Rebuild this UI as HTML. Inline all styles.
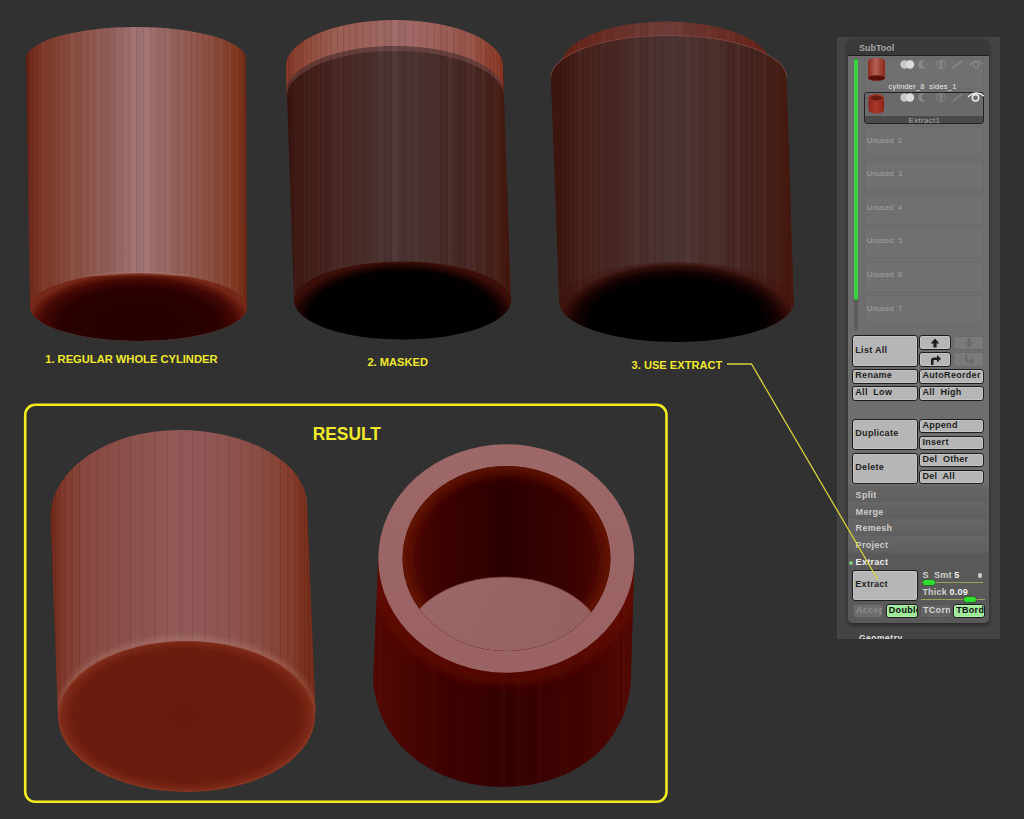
<!DOCTYPE html>
<html><head><meta charset="utf-8">
<style>
html,body{margin:0;padding:0;background:#313131;width:1024px;height:819px;overflow:hidden;}
svg{position:absolute;left:0;top:0;}
text{font-family:"Liberation Sans",sans-serif;}

#panel .strip{position:absolute;left:837px;top:36.7px;width:162.7px;height:602px;background:#444;}
#panel .inner{position:absolute;left:847.8px;top:39px;width:141.5px;height:584px;border-radius:5px;background:#5a5a5a;box-shadow:0 2px 4px rgba(0,0,0,0.45);overflow:hidden;}
#panel .hdr{position:absolute;left:0;top:0;width:100%;height:15.5px;background:#393939;border-bottom:1px solid #1f1f1f;}
#panel .list{position:absolute;left:0;top:16.5px;width:100%;height:430px;background:#6e6e6e;}
#panel .rows{position:absolute;left:0;top:446.2px;width:100%;height:67.5px;background:repeating-linear-gradient(#666 0px,#606060 15.5px,#555 16px,#6a6a6a 17px);}
#panel .sub{position:absolute;left:0;top:513.7px;width:100%;height:71px;background:#595959;}
.t{position:absolute;white-space:pre;font-family:"Liberation Sans",sans-serif;line-height:10px;}
.un{left:866.8px;font-size:7.6px;color:#a2a2a2;letter-spacing:0.1px;}
.mi{left:855.6px;font-size:9px;font-weight:bold;color:#cdcdcd;letter-spacing:0.3px;}
.srow{position:absolute;left:864.4px;width:119.4px;box-sizing:border-box;border:1px solid #6a6a6a;border-radius:2px;background:#707070;}
.srow.sel{border:1.5px solid #222;background:#6a6a6a;border-radius:3px;overflow:hidden;}
.srow .lbl{position:absolute;left:0;bottom:0;width:100%;height:7px;background:#4a4a4a;}
.b{position:absolute;box-sizing:border-box;border:1.2px solid #1c1c1c;border-radius:3px;background:#b6b6b6;box-shadow:inset 0 0 0 0.6px #cfcfcf;font-family:"Liberation Sans",sans-serif;font-weight:bold;font-size:9px;letter-spacing:0.3px;color:#1e1e1e;white-space:pre;padding-left:2.3px;line-height:10.8px;overflow:hidden;}
.b.dis{background:#7a7a7a;border-color:#6a6a6a;box-shadow:none;}
.b.dis2{background:#6c6c6c;border-color:#5e5e5e;box-shadow:none;color:#8c8c8c;}
.b.grn{background:#9ee89a;box-shadow:inset 0 0 0 0.6px #c4f8c0;color:#101010;}
.b.dk{background:#646464;border-color:#555;box-shadow:none;color:#d6d6d6;}
</style></head>
<body>
<svg width="1024" height="819" viewBox="0 0 1024 819">
<defs>
  <clipPath id="cap1top"><rect x="60" y="260" width="160" height="16"/></clipPath>
  <clipPath id="cp1"><path d="M26,59 A110,32 0 0 1 246,59 L247,307 A108.5,34 0 0 1 30,307 Z"/></clipPath>
  <clipPath id="cp2"><path d="M286,66 A108.5,46 0 0 1 503,66 L511,300 A108.5,39 0 0 1 294,300 Z"/></clipPath>
  <clipPath id="cp3t"><path d="M561.5,64.6 A104.5,43 0 0 1 770.5,64.6 L771,90 L561.5,90 Z"/></clipPath>
  <clipPath id="cp3"><path d="M550.7,77.5 A118,42 0 0 1 786.7,77.5 L794,302 A117.5,40 0 0 1 559,302 Z"/></clipPath>
  <clipPath id="cpr1"><path d="M50.5,517 A128.3,87 0 0 1 178.8,430 A128.3,75 0 0 1 307.1,505 L315,700 A128,75 0 0 1 58,716 Z"/></clipPath>
  <clipPath id="cpr2"><path d="M378.4,558 L373,680 C378,750 440,787 503,787 C566,787 626,752 631,680 L634.2,558 Z"/></clipPath>
  <clipPath id="holeclip"><ellipse cx="506.5" cy="558.5" rx="104" ry="92.5"/></clipPath>
  <linearGradient id="c1side" x1="26" y1="0" x2="247" y2="0" gradientUnits="userSpaceOnUse">
    <stop offset="0" stop-color="#6c2416"/>
    <stop offset="0.06" stop-color="#7e3828"/>
    <stop offset="0.25" stop-color="#8c5246"/>
    <stop offset="0.45" stop-color="#9a6a68"/>
    <stop offset="0.53" stop-color="#a27574"/>
    <stop offset="0.68" stop-color="#96625c"/>
    <stop offset="0.85" stop-color="#8c4c3e"/>
    <stop offset="0.96" stop-color="#80361e"/>
    <stop offset="1" stop-color="#702814"/>
  </linearGradient>
  <radialGradient id="c1cap" cx="138.5" cy="324" r="112" gradientUnits="userSpaceOnUse" gradientTransform="translate(0 324) scale(1 0.46) translate(0 -324)">
    <stop offset="0" stop-color="#240000"/>
    <stop offset="0.7" stop-color="#2a0100"/>
    <stop offset="0.86" stop-color="#440804"/>
    <stop offset="0.95" stop-color="#62180c"/>
    <stop offset="1" stop-color="#762818"/>
  </radialGradient>
  <linearGradient id="c2side" x1="286" y1="0" x2="511" y2="0" gradientUnits="userSpaceOnUse">
    <stop offset="0" stop-color="#3c1610"/>
    <stop offset="0.12" stop-color="#44201a"/>
    <stop offset="0.5" stop-color="#4c3535"/>
    <stop offset="0.88" stop-color="#46241e"/>
    <stop offset="1" stop-color="#48180e"/>
  </linearGradient>
  <linearGradient id="c2band" x1="286" y1="0" x2="503" y2="0" gradientUnits="userSpaceOnUse">
    <stop offset="0" stop-color="#8a3a28"/>
    <stop offset="0.2" stop-color="#985a4e"/>
    <stop offset="0.55" stop-color="#a06a68"/>
    <stop offset="0.85" stop-color="#985448"/>
    <stop offset="1" stop-color="#8a3520"/>
  </linearGradient>
  <radialGradient id="c2cap" cx="402.5" cy="318" r="112" gradientUnits="userSpaceOnUse" gradientTransform="translate(0 318) scale(1 0.5) translate(0 -318)">
    <stop offset="0" stop-color="#000"/>
    <stop offset="0.84" stop-color="#030000"/>
    <stop offset="0.94" stop-color="#240604"/>
    <stop offset="1" stop-color="#3c0e08"/>
  </radialGradient>
  <linearGradient id="c3side" x1="551" y1="0" x2="794" y2="0" gradientUnits="userSpaceOnUse">
    <stop offset="0" stop-color="#3e140e"/>
    <stop offset="0.15" stop-color="#46221c"/>
    <stop offset="0.5" stop-color="#4d3535"/>
    <stop offset="0.85" stop-color="#46241e"/>
    <stop offset="1" stop-color="#4a180e"/>
  </linearGradient>
  <linearGradient id="c3top" x1="561" y1="0" x2="771" y2="0" gradientUnits="userSpaceOnUse">
    <stop offset="0" stop-color="#662216"/>
    <stop offset="0.5" stop-color="#6e3c38"/>
    <stop offset="1" stop-color="#662216"/>
  </linearGradient>
  <radialGradient id="c3cap" cx="676.5" cy="324" r="120" gradientUnits="userSpaceOnUse" gradientTransform="translate(0 324) scale(1 0.52) translate(0 -324)">
    <stop offset="0" stop-color="#000"/>
    <stop offset="0.72" stop-color="#010000"/>
    <stop offset="0.84" stop-color="#140202"/>
    <stop offset="0.93" stop-color="#2e0a06" stop-opacity="0.9"/>
    <stop offset="1" stop-color="#401008" stop-opacity="0.3"/>
  </radialGradient>
  <linearGradient id="r1side" x1="50" y1="0" x2="315" y2="0" gradientUnits="userSpaceOnUse">
    <stop offset="0" stop-color="#742818"/>
    <stop offset="0.04" stop-color="#80382a"/>
    <stop offset="0.15" stop-color="#8a4a42"/>
    <stop offset="0.35" stop-color="#8e5450"/>
    <stop offset="0.55" stop-color="#935c5a"/>
    <stop offset="0.8" stop-color="#8a4c44"/>
    <stop offset="0.93" stop-color="#843a28"/>
    <stop offset="1" stop-color="#762a16"/>
  </linearGradient>
  <radialGradient id="r1cap" cx="186.5" cy="716" r="128" gradientUnits="userSpaceOnUse" gradientTransform="translate(0 716) scale(1 0.59) translate(0 -716)">
    <stop offset="0" stop-color="#6a1a0c"/>
    <stop offset="0.88" stop-color="#6c1c0e"/>
    <stop offset="0.97" stop-color="#7a2816"/>
    <stop offset="1" stop-color="#883420"/>
  </radialGradient>
  <linearGradient id="r1hl" x1="0" y1="630" x2="0" y2="650" gradientUnits="userSpaceOnUse">
    <stop offset="0" stop-color="#fff" stop-opacity="0"/>
    <stop offset="0.7" stop-color="#ffd8d0" stop-opacity="0.18"/>
    <stop offset="1" stop-color="#fff" stop-opacity="0"/>
  </linearGradient>
  <linearGradient id="r2body" x1="373" y1="0" x2="634" y2="0" gradientUnits="userSpaceOnUse">
    <stop offset="0" stop-color="#560a04"/>
    <stop offset="0.2" stop-color="#440402"/>
    <stop offset="0.5" stop-color="#330100"/>
    <stop offset="0.8" stop-color="#420402"/>
    <stop offset="1" stop-color="#560a04"/>
  </linearGradient>
  <linearGradient id="r2hole" x1="402" y1="0" x2="611" y2="0" gradientUnits="userSpaceOnUse">
    <stop offset="0" stop-color="#4e0a04"/>
    <stop offset="0.2" stop-color="#3a0201"/>
    <stop offset="0.5" stop-color="#2c0000"/>
    <stop offset="0.8" stop-color="#380201"/>
    <stop offset="1" stop-color="#4c0a04"/>
  </linearGradient>
  <linearGradient id="r2rim" x1="0" y1="444" x2="0" y2="673" gradientUnits="userSpaceOnUse">
    <stop offset="0" stop-color="#9e6868"/>
    <stop offset="1" stop-color="#9a6262"/>
  </linearGradient>
  <linearGradient id="r2disk" x1="420" y1="577" x2="590" y2="650" gradientUnits="userSpaceOnUse">
    <stop offset="0" stop-color="#9a6666"/>
    <stop offset="1" stop-color="#946060"/>
  </linearGradient>
</defs>

<!-- ============ Cylinder 1 ============ -->
<path d="M26,59 A110,32 0 0 1 246,59 L247,307 A108.5,34 0 0 1 30,307 Z" fill="url(#c1side)"/>
<g clip-path="url(#cp1)"><rect x="26.5" y="20" width="0.2" height="300" fill="#fff" opacity="0.019"/><rect x="26.7" y="20" width="0.7" height="300" fill="#000" opacity="0.021"/><rect x="27.4" y="20" width="1.2" height="300" fill="#000" opacity="0.002"/><rect x="28.6" y="20" width="1.6" height="300" fill="#fff" opacity="0.029"/><rect x="30.2" y="20" width="2.1" height="300" fill="#fff" opacity="0.008"/><rect x="34.9" y="20" width="3.0" height="300" fill="#000" opacity="0.029"/><rect x="37.8" y="20" width="3.4" height="300" fill="#000" opacity="0.022"/><rect x="41.2" y="20" width="3.8" height="300" fill="#fff" opacity="0.022"/><rect x="49.2" y="20" width="4.6" height="300" fill="#000" opacity="0.026"/><rect x="53.8" y="20" width="4.9" height="300" fill="#000" opacity="0.002"/><rect x="64.0" y="20" width="5.6" height="300" fill="#000" opacity="0.011"/><rect x="69.5" y="20" width="5.9" height="300" fill="#fff" opacity="0.030"/><rect x="75.4" y="20" width="6.1" height="300" fill="#000" opacity="0.025"/><rect x="101.1" y="20" width="6.9" height="300" fill="#000" opacity="0.028"/><rect x="108.0" y="20" width="7.0" height="300" fill="#000" opacity="0.033"/><rect x="122.1" y="20" width="7.2" height="300" fill="#fff" opacity="0.005"/><rect x="129.3" y="20" width="7.2" height="300" fill="#fff" opacity="0.034"/><rect x="136.5" y="20" width="7.2" height="300" fill="#000" opacity="0.022"/><rect x="143.7" y="20" width="7.2" height="300" fill="#fff" opacity="0.018"/><rect x="150.9" y="20" width="7.1" height="300" fill="#000" opacity="0.012"/><rect x="158.0" y="20" width="7.0" height="300" fill="#000" opacity="0.020"/><rect x="171.9" y="20" width="6.7" height="300" fill="#000" opacity="0.033"/><rect x="191.5" y="20" width="6.1" height="300" fill="#000" opacity="0.006"/><rect x="214.3" y="20" width="4.9" height="300" fill="#000" opacity="0.025"/><rect x="219.2" y="20" width="4.6" height="300" fill="#fff" opacity="0.029"/><rect x="223.8" y="20" width="4.2" height="300" fill="#000" opacity="0.010"/><rect x="228.0" y="20" width="3.8" height="300" fill="#fff" opacity="0.030"/><rect x="235.2" y="20" width="3.0" height="300" fill="#fff" opacity="0.028"/><rect x="238.1" y="20" width="2.5" height="300" fill="#000" opacity="0.005"/><rect x="240.7" y="20" width="2.1" height="300" fill="#fff" opacity="0.027"/><rect x="244.4" y="20" width="1.2" height="300" fill="#fff" opacity="0.022"/><rect x="245.6" y="20" width="0.7" height="300" fill="#fff" opacity="0.025"/><rect x="246.3" y="20" width="0.2" height="300" fill="#fff" opacity="0.031"/><path d="M26.5,20V320M26.7,20V320M27.4,20V320M28.6,20V320M30.2,20V320M32.3,20V320M34.9,20V320M37.8,20V320M41.2,20V320M45.0,20V320M49.2,20V320M53.8,20V320M58.7,20V320M64.0,20V320M69.5,20V320M75.4,20V320M81.5,20V320M87.8,20V320M94.4,20V320M101.1,20V320M108.0,20V320M115.0,20V320M122.1,20V320M129.3,20V320M136.5,20V320M143.7,20V320M150.9,20V320M158.0,20V320M165.0,20V320M171.9,20V320M178.6,20V320M185.2,20V320M191.5,20V320M197.6,20V320M203.5,20V320M209.0,20V320M214.3,20V320M219.2,20V320M223.8,20V320M228.0,20V320M231.8,20V320M235.2,20V320M238.1,20V320M240.7,20V320M242.8,20V320M244.4,20V320M245.6,20V320M246.3,20V320" stroke="#000" stroke-width="0.7" opacity="0.13"/></g>
<ellipse cx="138.5" cy="307" rx="108.5" ry="34" fill="url(#c1cap)"/>
<g clip-path="url(#cap1top)"><ellipse cx="138.5" cy="307" rx="107.5" ry="33.5" fill="none" stroke="#e0a898" stroke-width="1.4" opacity="0.45" filter="url(#blur1)"/></g>

<!-- ============ Cylinder 2 ============ -->
<path d="M286,66 A108.5,46 0 0 1 503,66 L511,300 A108.5,39 0 0 1 294,300 Z" fill="url(#c2side)"/>
<path d="M286,66 A108.5,46 0 0 1 503,66 L503.5,92 A108.5,46 0 0 0 286.5,92 Z" fill="url(#c2band)"/>
<path d="M286.5,92 A108.5,46 0 0 1 503.5,92 L504,97 A108.5,46 0 0 0 286.7,97 Z" fill="#8a5654" opacity="0.45"/>
<g clip-path="url(#cp2)"><rect x="288.5" y="15" width="0.2" height="305" fill="#000" opacity="0.022"/><rect x="294.3" y="15" width="2.5" height="305" fill="#fff" opacity="0.014"/><rect x="299.8" y="15" width="3.4" height="305" fill="#000" opacity="0.027"/><rect x="303.2" y="15" width="3.8" height="305" fill="#fff" opacity="0.014"/><rect x="307.0" y="15" width="4.2" height="305" fill="#fff" opacity="0.016"/><rect x="311.2" y="15" width="4.6" height="305" fill="#000" opacity="0.000"/><rect x="315.8" y="15" width="4.9" height="305" fill="#fff" opacity="0.008"/><rect x="331.5" y="15" width="5.9" height="305" fill="#fff" opacity="0.024"/><rect x="337.4" y="15" width="6.1" height="305" fill="#fff" opacity="0.019"/><rect x="343.5" y="15" width="6.3" height="305" fill="#fff" opacity="0.000"/><rect x="356.4" y="15" width="6.7" height="305" fill="#fff" opacity="0.006"/><rect x="377.0" y="15" width="7.1" height="305" fill="#fff" opacity="0.029"/><rect x="384.1" y="15" width="7.2" height="305" fill="#000" opacity="0.020"/><rect x="391.3" y="15" width="7.2" height="305" fill="#fff" opacity="0.028"/><rect x="398.5" y="15" width="7.2" height="305" fill="#000" opacity="0.029"/><rect x="412.9" y="15" width="7.1" height="305" fill="#fff" opacity="0.011"/><rect x="420.0" y="15" width="7.0" height="305" fill="#fff" opacity="0.004"/><rect x="427.0" y="15" width="6.9" height="305" fill="#fff" opacity="0.009"/><rect x="433.9" y="15" width="6.7" height="305" fill="#000" opacity="0.000"/><rect x="440.6" y="15" width="6.6" height="305" fill="#000" opacity="0.010"/><rect x="447.2" y="15" width="6.3" height="305" fill="#fff" opacity="0.025"/><rect x="453.5" y="15" width="6.1" height="305" fill="#000" opacity="0.009"/><rect x="459.6" y="15" width="5.9" height="305" fill="#000" opacity="0.021"/><rect x="465.5" y="15" width="5.6" height="305" fill="#fff" opacity="0.029"/><rect x="471.0" y="15" width="5.3" height="305" fill="#fff" opacity="0.022"/><rect x="481.2" y="15" width="4.6" height="305" fill="#fff" opacity="0.024"/><rect x="485.8" y="15" width="4.2" height="305" fill="#000" opacity="0.017"/><rect x="490.0" y="15" width="3.8" height="305" fill="#fff" opacity="0.001"/><rect x="493.8" y="15" width="3.4" height="305" fill="#fff" opacity="0.029"/><rect x="497.2" y="15" width="3.0" height="305" fill="#fff" opacity="0.023"/><rect x="504.8" y="15" width="1.6" height="305" fill="#fff" opacity="0.011"/><rect x="506.4" y="15" width="1.2" height="305" fill="#000" opacity="0.023"/><rect x="507.6" y="15" width="0.7" height="305" fill="#fff" opacity="0.022"/><path d="M288.5,15V320M288.7,15V320M289.4,15V320M290.6,15V320M292.2,15V320M294.3,15V320M296.9,15V320M299.8,15V320M303.2,15V320M307.0,15V320M311.2,15V320M315.8,15V320M320.7,15V320M326.0,15V320M331.5,15V320M337.4,15V320M343.5,15V320M349.8,15V320M356.4,15V320M363.1,15V320M370.0,15V320M377.0,15V320M384.1,15V320M391.3,15V320M398.5,15V320M405.7,15V320M412.9,15V320M420.0,15V320M427.0,15V320M433.9,15V320M440.6,15V320M447.2,15V320M453.5,15V320M459.6,15V320M465.5,15V320M471.0,15V320M476.3,15V320M481.2,15V320M485.8,15V320M490.0,15V320M493.8,15V320M497.2,15V320M500.1,15V320M502.7,15V320M504.8,15V320M506.4,15V320M507.6,15V320M508.3,15V320" stroke="#000" stroke-width="0.7" opacity="0.14"/></g>
<ellipse cx="402.5" cy="300.6" rx="108.5" ry="39" fill="url(#c2cap)"/>

<!-- ============ Cylinder 3 ============ -->
<path d="M561.5,64.6 A104.5,43 0 0 1 770.5,64.6 L771,90 L561.5,90 Z" fill="url(#c3top)"/>
<g clip-path="url(#cp3t)"><rect x="561.0" y="15" width="0.3" height="80" fill="#000" opacity="0.016"/><rect x="562.0" y="15" width="1.3" height="80" fill="#fff" opacity="0.015"/><rect x="565.1" y="15" width="2.3" height="80" fill="#000" opacity="0.002"/><rect x="567.3" y="15" width="2.7" height="80" fill="#fff" opacity="0.008"/><rect x="573.3" y="15" width="3.7" height="80" fill="#fff" opacity="0.010"/><rect x="577.0" y="15" width="4.1" height="80" fill="#fff" opacity="0.017"/><rect x="585.6" y="15" width="4.9" height="80" fill="#000" opacity="0.020"/><rect x="590.5" y="15" width="5.3" height="80" fill="#fff" opacity="0.016"/><rect x="601.4" y="15" width="5.9" height="80" fill="#fff" opacity="0.014"/><rect x="607.3" y="15" width="6.2" height="80" fill="#000" opacity="0.019"/><rect x="613.5" y="15" width="6.5" height="80" fill="#fff" opacity="0.011"/><rect x="626.7" y="15" width="6.9" height="80" fill="#000" opacity="0.006"/><rect x="633.6" y="15" width="7.0" height="80" fill="#fff" opacity="0.019"/><rect x="640.6" y="15" width="7.2" height="80" fill="#000" opacity="0.020"/><rect x="647.8" y="15" width="7.3" height="80" fill="#fff" opacity="0.016"/><rect x="669.7" y="15" width="7.3" height="80" fill="#fff" opacity="0.007"/><rect x="677.0" y="15" width="7.3" height="80" fill="#fff" opacity="0.015"/><rect x="684.2" y="15" width="7.2" height="80" fill="#000" opacity="0.019"/><rect x="691.4" y="15" width="7.0" height="80" fill="#000" opacity="0.015"/><rect x="705.3" y="15" width="6.7" height="80" fill="#fff" opacity="0.011"/><rect x="718.5" y="15" width="6.2" height="80" fill="#000" opacity="0.007"/><rect x="724.7" y="15" width="5.9" height="80" fill="#fff" opacity="0.016"/><rect x="730.6" y="15" width="5.6" height="80" fill="#fff" opacity="0.012"/><rect x="736.3" y="15" width="5.3" height="80" fill="#000" opacity="0.011"/><rect x="741.5" y="15" width="4.9" height="80" fill="#fff" opacity="0.013"/><rect x="750.9" y="15" width="4.1" height="80" fill="#fff" opacity="0.007"/><rect x="758.7" y="15" width="3.2" height="80" fill="#000" opacity="0.005"/><rect x="761.9" y="15" width="2.7" height="80" fill="#fff" opacity="0.015"/><rect x="764.7" y="15" width="2.3" height="80" fill="#fff" opacity="0.009"/><rect x="766.9" y="15" width="1.8" height="80" fill="#fff" opacity="0.013"/><rect x="770.0" y="15" width="0.8" height="80" fill="#fff" opacity="0.002"/><path d="M561.0,15V95M561.3,15V95M562.0,15V95M563.3,15V95M565.1,15V95M567.3,15V95M570.1,15V95M573.3,15V95M577.0,15V95M581.1,15V95M585.6,15V95M590.5,15V95M595.7,15V95M601.4,15V95M607.3,15V95M613.5,15V95M620.0,15V95M626.7,15V95M633.6,15V95M640.6,15V95M647.8,15V95M655.0,15V95M662.3,15V95M669.7,15V95M677.0,15V95M684.2,15V95M691.4,15V95M698.4,15V95M705.3,15V95M712.0,15V95M718.5,15V95M724.7,15V95M730.6,15V95M736.3,15V95M741.5,15V95M746.4,15V95M750.9,15V95M755.0,15V95M758.7,15V95M761.9,15V95M764.7,15V95M766.9,15V95M768.7,15V95M770.0,15V95M770.7,15V95" stroke="#000" stroke-width="0.7" opacity="0.09"/></g>
<g clip-path="url(#cp3)"><path d="M550.7,77.5 A118,42 0 0 1 786.7,77.5 L794,302 A117.5,40 0 0 1 559,302 Z" fill="url(#c3side)"/><rect x="550.0" y="30" width="0.2" height="290" fill="#fff" opacity="0.005"/><rect x="550.2" y="30" width="0.7" height="290" fill="#000" opacity="0.002"/><rect x="550.9" y="30" width="1.2" height="290" fill="#000" opacity="0.011"/><rect x="552.1" y="30" width="1.6" height="290" fill="#fff" opacity="0.015"/><rect x="553.8" y="30" width="2.1" height="290" fill="#fff" opacity="0.013"/><rect x="555.9" y="30" width="2.6" height="290" fill="#fff" opacity="0.003"/><rect x="558.4" y="30" width="3.0" height="290" fill="#000" opacity="0.025"/><rect x="561.4" y="30" width="3.4" height="290" fill="#fff" opacity="0.007"/><rect x="564.8" y="30" width="3.8" height="290" fill="#000" opacity="0.028"/><rect x="568.7" y="30" width="4.2" height="290" fill="#000" opacity="0.012"/><rect x="577.5" y="30" width="5.0" height="290" fill="#fff" opacity="0.026"/><rect x="582.5" y="30" width="5.3" height="290" fill="#fff" opacity="0.004"/><rect x="587.9" y="30" width="5.7" height="290" fill="#fff" opacity="0.009"/><rect x="599.5" y="30" width="6.2" height="290" fill="#fff" opacity="0.017"/><rect x="605.7" y="30" width="6.5" height="290" fill="#000" opacity="0.011"/><rect x="612.2" y="30" width="6.7" height="290" fill="#000" opacity="0.002"/><rect x="618.9" y="30" width="6.9" height="290" fill="#fff" opacity="0.006"/><rect x="625.8" y="30" width="7.1" height="290" fill="#000" opacity="0.013"/><rect x="632.9" y="30" width="7.2" height="290" fill="#fff" opacity="0.018"/><rect x="640.2" y="30" width="7.4" height="290" fill="#000" opacity="0.009"/><rect x="655.0" y="30" width="7.5" height="290" fill="#000" opacity="0.007"/><rect x="662.5" y="30" width="7.5" height="290" fill="#000" opacity="0.016"/><rect x="685.0" y="30" width="7.4" height="290" fill="#fff" opacity="0.029"/><rect x="692.5" y="30" width="7.4" height="290" fill="#fff" opacity="0.013"/><rect x="707.1" y="30" width="7.1" height="290" fill="#fff" opacity="0.015"/><rect x="714.2" y="30" width="6.9" height="290" fill="#fff" opacity="0.020"/><rect x="727.8" y="30" width="6.5" height="290" fill="#000" opacity="0.026"/><rect x="734.3" y="30" width="6.2" height="290" fill="#fff" opacity="0.021"/><rect x="740.5" y="30" width="6.0" height="290" fill="#000" opacity="0.017"/><rect x="746.5" y="30" width="5.7" height="290" fill="#000" opacity="0.025"/><rect x="757.5" y="30" width="5.0" height="290" fill="#000" opacity="0.020"/><rect x="762.5" y="30" width="4.6" height="290" fill="#fff" opacity="0.021"/><rect x="767.1" y="30" width="4.2" height="290" fill="#000" opacity="0.030"/><rect x="775.2" y="30" width="3.4" height="290" fill="#fff" opacity="0.012"/><rect x="778.6" y="30" width="3.0" height="290" fill="#000" opacity="0.001"/><rect x="781.6" y="30" width="2.6" height="290" fill="#000" opacity="0.005"/><rect x="784.1" y="30" width="2.1" height="290" fill="#fff" opacity="0.002"/><rect x="787.9" y="30" width="1.2" height="290" fill="#fff" opacity="0.007"/><rect x="789.1" y="30" width="0.7" height="290" fill="#000" opacity="0.026"/><rect x="789.8" y="30" width="0.2" height="290" fill="#fff" opacity="0.013"/><path d="M550.0,30V320M550.2,30V320M550.9,30V320M552.1,30V320M553.8,30V320M555.9,30V320M558.4,30V320M561.4,30V320M564.8,30V320M568.7,30V320M572.9,30V320M577.5,30V320M582.5,30V320M587.9,30V320M593.5,30V320M599.5,30V320M605.7,30V320M612.2,30V320M618.9,30V320M625.8,30V320M632.9,30V320M640.2,30V320M647.5,30V320M655.0,30V320M662.5,30V320M670.0,30V320M677.5,30V320M685.0,30V320M692.5,30V320M699.8,30V320M707.1,30V320M714.2,30V320M721.1,30V320M727.8,30V320M734.3,30V320M740.5,30V320M746.5,30V320M752.1,30V320M757.5,30V320M762.5,30V320M767.1,30V320M771.3,30V320M775.2,30V320M778.6,30V320M781.6,30V320M784.1,30V320M786.2,30V320M787.9,30V320M789.1,30V320M789.8,30V320" stroke="#000" stroke-width="0.7" opacity="0.14"/></g>
<path d="M550.7,77.5 A118,42 0 0 1 786.7,77.5" fill="none" stroke="#9a5a52" stroke-width="1.1" opacity="0.5"/>
<ellipse cx="676.5" cy="302" rx="117.5" ry="40" fill="url(#c3cap)"/>

<!-- labels -->
<g fill="#f0ea2a" font-weight="bold" font-size="11.2">
  <text x="45.2" y="363.2" textLength="172.3" lengthAdjust="spacingAndGlyphs">1. REGULAR WHOLE CYLINDER</text>
  <text x="367.4" y="365.6" textLength="60.6" lengthAdjust="spacingAndGlyphs">2. MASKED</text>
  <text x="631.6" y="368.7" textLength="90.7" lengthAdjust="spacingAndGlyphs">3. USE EXTRACT</text>
  <text x="312.7" y="439.9" font-size="17.6" textLength="68.2" lengthAdjust="spacingAndGlyphs">RESULT</text>
</g>

<!-- result border -->
<rect x="25.2" y="404.8" width="641.3" height="397" rx="10" ry="10" fill="none" stroke="#f2ec1e" stroke-width="2.6"/>

<!-- ============ Result closed ============ -->
<path d="M50.5,517 A128.3,87 0 0 1 178.8,430 A128.3,75 0 0 1 307.1,505 L315,700 A128,75 0 0 1 58,716 Z" fill="url(#r1side)"/>
<g clip-path="url(#cpr1)"><rect x="50.0" y="420" width="0.6" height="380" fill="#000" opacity="0.011"/><rect x="52.5" y="420" width="3.1" height="380" fill="#000" opacity="0.010"/><rect x="55.6" y="420" width="4.3" height="380" fill="#000" opacity="0.004"/><rect x="59.9" y="420" width="5.5" height="380" fill="#000" opacity="0.013"/><rect x="71.9" y="420" width="7.6" height="380" fill="#fff" opacity="0.006"/><rect x="79.5" y="420" width="8.6" height="380" fill="#fff" opacity="0.016"/><rect x="88.1" y="420" width="9.5" height="380" fill="#000" opacity="0.001"/><rect x="118.7" y="420" width="11.5" height="380" fill="#000" opacity="0.012"/><rect x="130.3" y="420" width="12.0" height="380" fill="#fff" opacity="0.000"/><rect x="142.3" y="420" width="12.4" height="380" fill="#000" opacity="0.001"/><rect x="154.6" y="420" width="12.6" height="380" fill="#fff" opacity="0.005"/><rect x="167.3" y="420" width="12.7" height="380" fill="#fff" opacity="0.009"/><rect x="180.0" y="420" width="12.7" height="380" fill="#000" opacity="0.017"/><rect x="192.7" y="420" width="12.6" height="380" fill="#000" opacity="0.013"/><rect x="205.4" y="420" width="12.4" height="380" fill="#000" opacity="0.013"/><rect x="217.7" y="420" width="12.0" height="380" fill="#000" opacity="0.006"/><rect x="271.9" y="420" width="8.6" height="380" fill="#fff" opacity="0.005"/><rect x="280.5" y="420" width="7.6" height="380" fill="#fff" opacity="0.001"/><rect x="294.6" y="420" width="5.5" height="380" fill="#000" opacity="0.017"/><rect x="300.1" y="420" width="4.3" height="380" fill="#000" opacity="0.019"/><rect x="307.5" y="420" width="1.9" height="380" fill="#fff" opacity="0.004"/><path d="M50.0,420V800M50.6,420V800M52.5,420V800M55.6,420V800M59.9,420V800M65.4,420V800M71.9,420V800M79.5,420V800M88.1,420V800M97.5,420V800M107.8,420V800M118.7,420V800M130.3,420V800M142.3,420V800M154.6,420V800M167.3,420V800M180.0,420V800M192.7,420V800M205.4,420V800M217.7,420V800M229.7,420V800M241.3,420V800M252.2,420V800M262.5,420V800M271.9,420V800M280.5,420V800M288.1,420V800M294.6,420V800M300.1,420V800M304.4,420V800M307.5,420V800M309.4,420V800" stroke="#000" stroke-width="0.7" opacity="0.16"/><ellipse cx="186.5" cy="714" rx="126" ry="74" fill="none" stroke="#f0c0b0" stroke-width="6" opacity="0.25" filter="url(#blur3)"/></g>
<ellipse cx="186.5" cy="716.5" rx="128.5" ry="75.5" fill="url(#r1cap)"/>

<!-- ============ Result open ============ -->
<path d="M378.4,558 L373,680 C378,750 440,787 503,787 C566,787 626,752 631,680 L634.2,558 Z" fill="url(#r2body)"/>
<g clip-path="url(#cpr2)"><rect x="373.0" y="550" width="0.2" height="250" fill="#fff" opacity="0.014"/><rect x="373.2" y="550" width="0.6" height="250" fill="#000" opacity="0.017"/><rect x="373.8" y="550" width="1.1" height="250" fill="#fff" opacity="0.005"/><rect x="374.9" y="550" width="1.5" height="250" fill="#fff" opacity="0.005"/><rect x="378.3" y="550" width="2.3" height="250" fill="#fff" opacity="0.011"/><rect x="380.6" y="550" width="2.7" height="250" fill="#fff" opacity="0.006"/><rect x="383.3" y="550" width="3.1" height="250" fill="#000" opacity="0.017"/><rect x="386.3" y="550" width="3.5" height="250" fill="#000" opacity="0.000"/><rect x="389.8" y="550" width="3.8" height="250" fill="#fff" opacity="0.003"/><rect x="429.6" y="550" width="6.2" height="250" fill="#fff" opacity="0.017"/><rect x="435.9" y="550" width="6.5" height="250" fill="#000" opacity="0.015"/><rect x="442.3" y="550" width="6.7" height="250" fill="#000" opacity="0.009"/><rect x="449.0" y="550" width="6.8" height="250" fill="#000" opacity="0.009"/><rect x="455.8" y="550" width="7.0" height="250" fill="#fff" opacity="0.002"/><rect x="484.5" y="550" width="7.4" height="250" fill="#000" opacity="0.011"/><rect x="499.3" y="550" width="7.4" height="250" fill="#fff" opacity="0.014"/><rect x="506.7" y="550" width="7.4" height="250" fill="#000" opacity="0.004"/><rect x="514.1" y="550" width="7.4" height="250" fill="#fff" opacity="0.010"/><rect x="521.5" y="550" width="7.3" height="250" fill="#fff" opacity="0.009"/><rect x="528.8" y="550" width="7.2" height="250" fill="#000" opacity="0.008"/><rect x="536.0" y="550" width="7.1" height="250" fill="#fff" opacity="0.010"/><rect x="543.2" y="550" width="7.0" height="250" fill="#fff" opacity="0.005"/><rect x="550.2" y="550" width="6.8" height="250" fill="#fff" opacity="0.007"/><rect x="557.0" y="550" width="6.7" height="250" fill="#fff" opacity="0.013"/><rect x="570.1" y="550" width="6.2" height="250" fill="#000" opacity="0.014"/><rect x="582.4" y="550" width="5.7" height="250" fill="#fff" opacity="0.003"/><rect x="598.8" y="550" width="4.9" height="250" fill="#000" opacity="0.003"/><rect x="603.6" y="550" width="4.5" height="250" fill="#000" opacity="0.017"/><rect x="616.2" y="550" width="3.5" height="250" fill="#fff" opacity="0.017"/><rect x="619.7" y="550" width="3.1" height="250" fill="#000" opacity="0.014"/><rect x="622.7" y="550" width="2.7" height="250" fill="#fff" opacity="0.019"/><rect x="625.4" y="550" width="2.3" height="250" fill="#000" opacity="0.014"/><rect x="627.7" y="550" width="1.9" height="250" fill="#fff" opacity="0.012"/><rect x="629.6" y="550" width="1.5" height="250" fill="#000" opacity="0.012"/><rect x="631.1" y="550" width="1.1" height="250" fill="#000" opacity="0.015"/><rect x="632.2" y="550" width="0.6" height="250" fill="#fff" opacity="0.006"/><rect x="632.8" y="550" width="0.2" height="250" fill="#fff" opacity="0.014"/><path d="M373.0,550V800M373.2,550V800M373.8,550V800M374.9,550V800M376.4,550V800M378.3,550V800M380.6,550V800M383.3,550V800M386.3,550V800M389.8,550V800M393.6,550V800M397.8,550V800M402.4,550V800M407.2,550V800M412.4,550V800M417.9,550V800M423.6,550V800M429.6,550V800M435.9,550V800M442.3,550V800M449.0,550V800M455.8,550V800M462.8,550V800M470.0,550V800M477.2,550V800M484.5,550V800M491.9,550V800M499.3,550V800M506.7,550V800M514.1,550V800M521.5,550V800M528.8,550V800M536.0,550V800M543.2,550V800M550.2,550V800M557.0,550V800M563.7,550V800M570.1,550V800M576.4,550V800M582.4,550V800M588.1,550V800M593.6,550V800M598.8,550V800M603.6,550V800M608.2,550V800M612.4,550V800M616.2,550V800M619.7,550V800M622.7,550V800M625.4,550V800M627.7,550V800M629.6,550V800M631.1,550V800M632.2,550V800M632.8,550V800" stroke="#000" stroke-width="0.7" opacity="0.1"/>
  <ellipse cx="506.3" cy="560" rx="128" ry="114.3" fill="none" stroke="#6a1006" stroke-width="22" opacity="0.6" filter="url(#blur6)"/>
</g>
<ellipse cx="506.3" cy="558.5" rx="128" ry="114.3" fill="url(#r2rim)"/>
<ellipse cx="506.5" cy="558.5" rx="104" ry="92.5" fill="url(#r2hole)"/>
<g clip-path="url(#holeclip)">
  <ellipse cx="506.5" cy="558.5" rx="104" ry="92.5" fill="none" stroke="#6a1406" stroke-width="16" opacity="0.85" filter="url(#blur6)"/>
  <ellipse cx="504" cy="645" rx="100" ry="68" fill="url(#r2disk)"/>
  <ellipse cx="504" cy="645" rx="100" ry="68" fill="none" stroke="#6a2a20" stroke-width="0.8"/>
</g>
<defs><filter id="blur1" x="-20%" y="-50%" width="140%" height="200%"><feGaussianBlur stdDeviation="1"/></filter><filter id="blur3" x="-20%" y="-20%" width="140%" height="140%"><feGaussianBlur stdDeviation="3"/></filter><filter id="blur6" x="-20%" y="-20%" width="140%" height="140%"><feGaussianBlur stdDeviation="6"/></filter></defs>
</svg>

<div id="panel">
  <div class="strip"></div>
  <div class="inner">
    <div class="hdr"></div>
    <div class="list"></div>
    <div class="rows"></div>
    <div class="sub"></div>
  </div>
  <div class="t" style="left:859px;top:43px;font-size:9px;font-weight:bold;color:#a6a6a6;">SubTool</div>
  <!-- scroll track -->
  <div style="position:absolute;left:854px;top:58px;width:3.5px;height:273px;background:#5c5c5c;border-radius:2px;"></div>
  <div style="position:absolute;left:854.3px;top:59px;width:3.6px;height:241px;background:#3ccf3c;border-radius:2px;box-shadow:0 0 1px #1a7a1a;"></div>
  <!-- subtool rows -->
  <div class="srow" style="top:58.2px;height:31.3px;"></div>
  <div class="srow sel" style="top:92px;height:31.5px;"><div class="lbl"></div></div>
  <div class="srow" style="top:126px;height:31px;"></div>
  <div class="srow" style="top:160px;height:31px;"></div>
  <div class="srow" style="top:194px;height:31px;"></div>
  <div class="srow" style="top:227px;height:31px;"></div>
  <div class="srow" style="top:261px;height:31px;"></div>
  <div class="srow" style="top:294.7px;height:30.5px;"></div>
  <div class="t un" style="top:135.5px;">Unused  2</div>
  <div class="t un" style="top:169.3px;">Unused  3</div>
  <div class="t un" style="top:202.8px;">Unused  4</div>
  <div class="t un" style="top:236.4px;">Unused  5</div>
  <div class="t un" style="top:269.9px;">Unused  6</div>
  <div class="t un" style="top:303.5px;">Unused  7</div>
  <div class="t" style="left:888.5px;top:82px;font-size:7.5px;color:#e8e8e8;letter-spacing:0.2px;">cylinder_8  sides_1</div>
  <div class="t" style="left:908.6px;top:115.5px;font-size:8px;color:#a8a8a8;letter-spacing:0.3px;">Extract1</div>
  <!-- thumbnails -->
  <svg style="position:absolute;left:860px;top:55px;" width="130" height="70" viewBox="860 55 130 70">
    <defs>
      <filter id="iblur" x="-10%" y="-50%" width="120%" height="200%"><feGaussianBlur stdDeviation="0.45"/></filter>
      <linearGradient id="th1" x1="868" x2="885" y1="0" y2="0" gradientUnits="userSpaceOnUse">
        <stop offset="0" stop-color="#8a2a1c"/><stop offset="0.45" stop-color="#b46056"/><stop offset="1" stop-color="#8a2618"/>
      </linearGradient>
      <linearGradient id="th2" x1="868" x2="885" y1="0" y2="0" gradientUnits="userSpaceOnUse">
        <stop offset="0" stop-color="#8a2214"/><stop offset="0.45" stop-color="#a8382a"/><stop offset="1" stop-color="#8a2010"/>
      </linearGradient>
    </defs>
    <path d="M868,61 A8.5,3 0 0 1 885,61 L885,78 A8.5,3 0 0 1 868,78 Z" fill="url(#th1)"/>
    <ellipse cx="876.5" cy="78" rx="8.3" ry="2.8" fill="#5a1008"/>
    <path d="M868.5,97 L868.5,110 A7.7,3.4 0 0 0 884,110 L884,97 Z" fill="url(#th2)"/>
    <ellipse cx="876.2" cy="97.5" rx="7.8" ry="3.6" fill="#a03a2a"/>
    <ellipse cx="876.2" cy="98" rx="6" ry="2.6" fill="#6a1a10"/>
    <!-- icons row1 -->
    <g filter="url(#iblur)">
    <circle cx="904.5" cy="64.5" r="4.2" fill="#c8c8c8"/>
    <circle cx="910" cy="64.5" r="4.2" fill="#dcdcdc"/>
    <circle cx="922.5" cy="64.5" r="4.3" fill="#8a8a8a"/>
    <circle cx="925.5" cy="64" r="3.6" fill="#717171"/>
    <circle cx="941" cy="64.5" r="4.3" fill="none" stroke="#858585" stroke-width="1.1"/>
    <rect x="939.6" y="60.5" width="2.8" height="8" fill="#858585"/>
    <path d="M952.5,68.5 Q955,66 958,64 Q961,62 962.5,60.5" fill="none" stroke="#858585" stroke-width="1.6"/>
    <path d="M969.5,65 Q976,58.5 983,64" fill="none" stroke="#888" stroke-width="1.2"/>
    <circle cx="976" cy="65" r="2.8" fill="none" stroke="#888" stroke-width="1.1"/>
    </g>
    <!-- icons row2 -->
    <g filter="url(#iblur)">
    <circle cx="904.5" cy="97.5" r="4.2" fill="#c8c8c8"/>
    <circle cx="910" cy="97.5" r="4.2" fill="#dcdcdc"/>
    <circle cx="922.5" cy="97.5" r="4.3" fill="#868686"/>
    <circle cx="925.5" cy="97" r="3.6" fill="#6b6b6b"/>
    <circle cx="941" cy="97.5" r="4.3" fill="none" stroke="#808080" stroke-width="1.1"/>
    <rect x="939.6" y="93.5" width="2.8" height="8" fill="#808080"/>
    <path d="M952.5,101.5 Q955,99 958,97 Q961,95 962.5,93.5" fill="none" stroke="#808080" stroke-width="1.6"/>
    </g>
    <path d="M968,97 Q976,89.5 984,96" fill="none" stroke="#e8e8e8" stroke-width="1.6"/>
    <circle cx="975.5" cy="97.8" r="3.2" fill="none" stroke="#e8e8e8" stroke-width="1.6"/>
  </svg>
  <!-- buttons -->
  <div class="b" style="left:852px;top:335.1px;width:66px;height:31.6px;line-height:28.5px;">List All</div>
  <div class="b" style="left:919.1px;top:335.2px;width:32.2px;height:14.8px;"></div>
  <div class="b" style="left:919.1px;top:352.3px;width:32.2px;height:14.3px;"></div>
  <div class="b dis" style="left:953.3px;top:336px;width:31.2px;height:14px;"></div>
  <div class="b dis" style="left:953.3px;top:352.3px;width:31.2px;height:14.3px;"></div>
  <svg style="position:absolute;left:919px;top:335px;" width="66" height="32" viewBox="919 335 66 32">
    <path d="M935,338.5 L939.3,343.5 L936.6,343.5 L936.6,347.5 L933.4,347.5 L933.4,343.5 L930.7,343.5 Z" fill="#1e1e1e"/>
    <path d="M931,365 L931,360 Q931,357.5 934,357.5 L937,357.5 L937,355 L941,358.8 L937,362.5 L937,360 L934,360 Q933.5,360 933.5,361 L933.5,365 Z" fill="#1e1e1e"/>
    <path d="M969,347.5 L973.3,342.5 L970.6,342.5 L970.6,338.5 L967.4,338.5 L967.4,342.5 L964.7,342.5 Z" fill="#6a6a6a"/>
    <path d="M965,355 L965,360 Q965,362.5 968,362.5 L971,362.5 L971,365 L975,361.2 L971,357.5 L971,360 L968,360 Q967.5,360 967.5,359 L967.5,355 Z" fill="#6a6a6a"/>
  </svg>
  <div class="b" style="left:852px;top:369px;width:66px;height:14.6px;">Rename</div>
  <div class="b" style="left:919.1px;top:369px;width:65.4px;height:14.6px;">AutoReorder</div>
  <div class="b" style="left:852px;top:385.5px;width:66px;height:15px;">All  Low</div>
  <div class="b" style="left:919.1px;top:385.5px;width:65.4px;height:15px;">All  High</div>
  <div class="b" style="left:852px;top:419.3px;width:66px;height:31.1px;line-height:27.4px;">Duplicate</div>
  <div class="b" style="left:919.1px;top:419.3px;width:65.4px;height:14.1px;">Append</div>
  <div class="b" style="left:919.1px;top:436px;width:65.4px;height:14.4px;">Insert</div>
  <div class="b" style="left:852px;top:453px;width:66px;height:30.6px;line-height:26.4px;">Delete</div>
  <div class="b" style="left:919.1px;top:453px;width:65.4px;height:14px;">Del  Other</div>
  <div class="b" style="left:919.1px;top:469.5px;width:65.4px;height:14.1px;">Del  All</div>
  <!-- menu rows -->
  <div class="t mi" style="top:489.5px;">Split</div>
  <div class="t mi" style="top:506.5px;">Merge</div>
  <div class="t mi" style="top:523.3px;">Remesh</div>
  <div class="t mi" style="top:540px;">Project</div>
  <div class="t mi" style="top:556.5px;color:#f0f0f0;">Extract</div>
  <div style="position:absolute;left:848.7px;top:560.6px;width:4px;height:4px;border-radius:50%;background:#7cc87c;"></div>
  <div class="b" style="left:852px;top:570.2px;width:66px;height:31.3px;line-height:27.8px;">Extract</div>
  <div class="t" style="left:922.4px;top:570px;font-size:9px;font-weight:bold;color:#d0d0d0;letter-spacing:0.2px;">S  Smt <span style="color:#f4f4f4">5</span></div>
  <div class="t" style="left:922.4px;top:587px;font-size:9px;font-weight:bold;color:#d0d0d0;letter-spacing:0.2px;">Thick <span style="color:#f4f4f4">0.09</span></div>
  <div style="position:absolute;left:921px;top:582px;width:62px;height:1px;background:#9aa05a;"></div>
  <div style="position:absolute;left:921px;top:599px;width:64px;height:1px;background:#9aa05a;"></div>
  <div style="position:absolute;left:922.5px;top:580px;width:12px;height:5px;border-radius:3px;background:#2ee02e;box-shadow:0 0 0 0.5px #1a6a1a;"></div>
  <div style="position:absolute;left:964px;top:596.8px;width:12px;height:5px;border-radius:3px;background:#2ee02e;box-shadow:0 0 0 0.5px #1a6a1a;"></div>
  <div style="position:absolute;left:977.5px;top:573.2px;width:4.5px;height:4.5px;border-radius:50%;background:#cfcfcf;"></div>
  <div class="b dis2" style="left:852.7px;top:604.4px;width:30.7px;height:13.9px;">Accept</div>
  <div class="b grn" style="left:885.5px;top:604.4px;width:32px;height:13.9px;">Double</div>
  <div class="b dk" style="left:919.7px;top:604.4px;width:31.1px;height:13.9px;">TCorner</div>
  <div class="b grn" style="left:952.9px;top:604.4px;width:32.1px;height:13.9px;">TBorder</div>
  <div class="t" style="left:859px;top:632px;font-size:8.5px;font-weight:bold;color:#e0e0e0;letter-spacing:0.5px;height:7px;overflow:hidden;line-height:12px;">Geometry</div>
</div>
<svg width="1024" height="819" viewBox="0 0 1024 819" style="position:absolute;left:0;top:0;pointer-events:none;">
  <polyline points="727,364 751.5,364 878,580" fill="none" stroke="#d8d23a" stroke-width="1.3"/>
</svg>
</body></html>
